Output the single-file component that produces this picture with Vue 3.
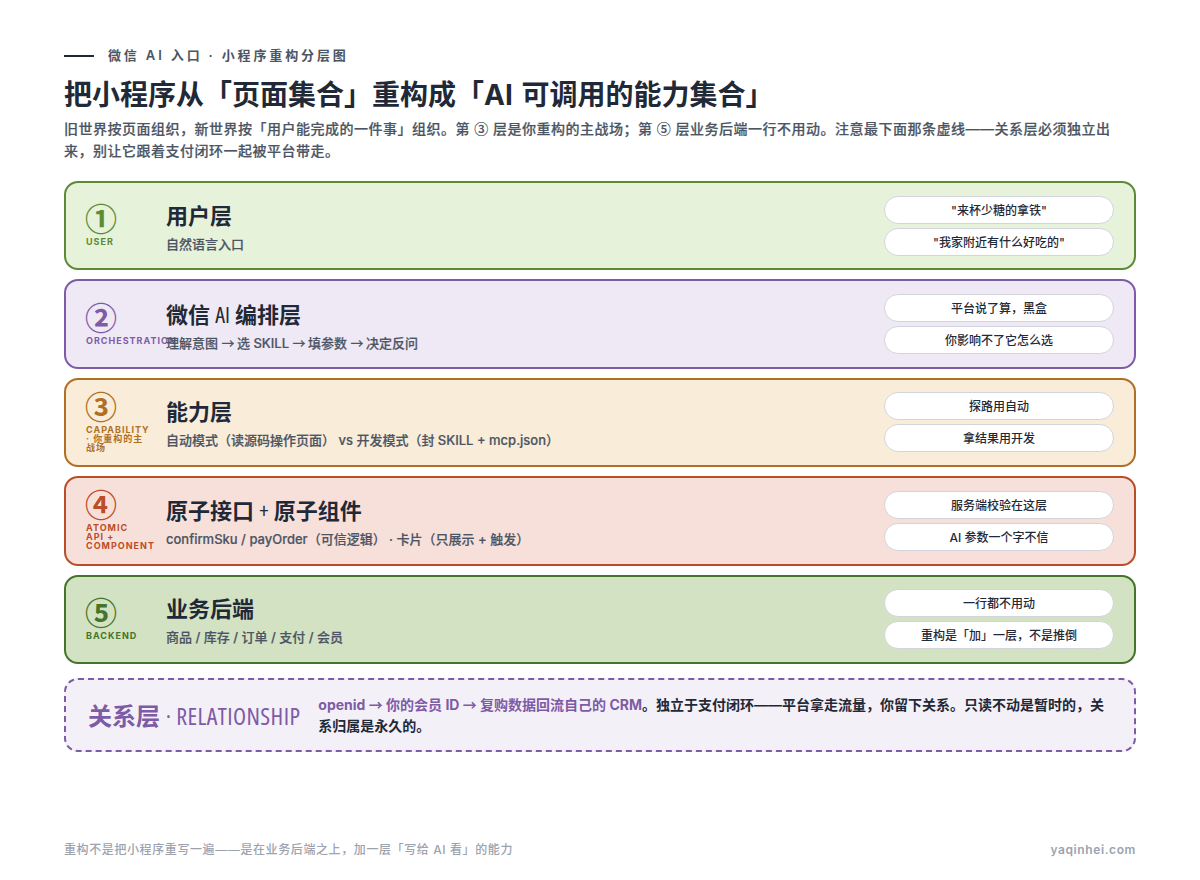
<template>
  <div class="page">
    <div class="eyebrow"><span class="rule"></span>微信 AI 入口 · 小程序重构分层图</div>
    <h1>把小程序从「页面集合」重构成「AI 可调用的能力集合」</h1>
    <p class="lead">旧世界按页面组织，新世界按「用户能完成的一件事」组织。第 <span class="cjk">③</span> 层是你重构的主战场；第 <span class="cjk">⑤</span> 层业务后端一行不用动。注意最下面那条虚线——关系层必须独立出来，别让它跟着支付闭环一起被平台带走。</p>

    <div class="layers">
      <div v-for="l in layers" :key="l.num" class="layer" :class="l.cls">
        <div class="num">
          <div class="digit">{{ l.num }}</div>
          <div class="tag">{{ l.tag }}</div>
        </div>
        <div class="body">
          <div class="name">
            <span v-for="(part, i) in nameParts(l.name)" :key="i" :class="{ thin: i % 2 === 1 }">{{ part }}</span>
          </div>
          <div class="desc">
            <span v-for="(part, i) in arrowParts(l.desc)" :key="i" :class="{ arrow: i % 2 === 1 }">{{ part }}</span>
          </div>
        </div>
        <div class="pills">
          <div v-for="p in l.pills" :key="p" class="pill">{{ p }}</div>
        </div>
      </div>
    </div>

    <div class="relation">
      <div class="rel-title">关系层 <span class="thin">· RELATIONSHIP</span></div>
      <div class="rel-text"><span class="hl"><span v-for="(part, i) in arrowParts(relationLead)" :key="i" :class="{ arrow: i % 2 === 1 }">{{ part }}</span></span>。独立于支付闭环——平台拿走流量，你留下关系。只读不动是暂时的，关系归属是永久的。</div>
    </div>

    <div class="footer">
      <span>重构不是把小程序重写一遍——是在业务后端之上，加一层「写给 AI 看」的能力</span>
      <span class="site">yaqinhei.com</span>
    </div>
  </div>
</template>

<script setup>
const layers = [
  { num: "①", cls: "l1", tag: "USER", name: "用户层", desc: "自然语言入口", pills: ['"来杯少糖的拿铁"', '"我家附近有什么好吃的"'] },
  { num: "②", cls: "l2", tag: "ORCHESTRATION", name: "微信 AI 编排层", desc: "理解意图 → 选 SKILL → 填参数 → 决定反问", pills: ["平台说了算，黑盒", "你影响不了它怎么选"] },
  { num: "③", cls: "l3", tag: "CAPABILITY · 你重构的主战场", name: "能力层", desc: "自动模式（读源码操作页面） vs 开发模式（封 SKILL + mcp.json）", pills: ["探路用自动", "拿结果用开发"] },
  { num: "④", cls: "l4", tag: "ATOMIC API + COMPONENT", name: "原子接口 + 原子组件", desc: "confirmSku / payOrder（可信逻辑） · 卡片（只展示 + 触发）", pills: ["服务端校验在这层", "AI 参数一个字不信"] },
  { num: "⑤", cls: "l5", tag: "BACKEND", name: "业务后端", desc: "商品 / 库存 / 订单 / 支付 / 会员", pills: ["一行都不用动", "重构是「加」一层，不是推倒"] },
];

const relationLead = "openid → 你的会员 ID → 复购数据回流自己的 CRM";

// 标题里的拉丁字符用窄字体
const nameParts = (name) => name.split(/([A-Za-z+]+)/);
// 箭头用 CJK 字体，比 Inter 的长
const arrowParts = (text) => text.split(/(→)/);
</script>

<style>
html, body { margin: 0; background: #fff; }
</style>

<style scoped>
.page {
  box-sizing: border-box;
  width: 1200px;
  height: 880px;
  padding: 47px 64px 0;
  font-family: Inter, "Noto Sans CJK SC", sans-serif;
  color: #1f2937;
  position: relative;
  display: flex;
  flex-direction: column;
}
.eyebrow {
  display: flex;
  align-items: center;
  gap: 14px;
  font-size: 13px;
  font-weight: 600;
  letter-spacing: 2.86px;
  line-height: 16px;
  color: #4b5563;
}
.rule { width: 30px; height: 2px; margin-top: 1px; background: #1f2937; }
h1 {
  margin: 14px 0 0;
  font-size: 28px;
  font-weight: 700;
  line-height: 36px;
  word-spacing: 2px;
  color: #1f2937;
}
.lead {
  margin: 4px 0 0;
  max-width: 1050px;
  font-size: 14px;
  font-weight: 500;
  letter-spacing: 0.5px;
  line-height: 22px;
  color: #4b5563;
  -webkit-text-stroke: 0.2px #4b5563;
}
.cjk { font-family: "Noto Sans CJK SC", sans-serif; }
.layers {
  margin-top: 19px;
  display: flex;
  flex-direction: column;
  gap: 9px;
}
.layer {
  box-sizing: border-box;
  height: 89.4px;
  display: flex;
  align-items: center;
  padding: 0 20px;
  border: 2px solid;
  border-radius: 14px;
}
.num { width: 80px; flex: none; }
.digit {
  height: 28px;
  margin-left: -1px;
  font-family: "Noto Sans CJK SC", sans-serif;
  font-size: 32px;
  font-weight: 700;
  line-height: 25px;
}
.tag {
  width: 60px;
  font-size: 9px;
  font-weight: 700;
  letter-spacing: 1px;
  line-height: 9px;
  margin-top: 4px;
}
.body { flex: 1; padding-top: 3px; }
.name { font-size: 22px; font-weight: 700; line-height: 30px; color: #1f2937; }
.thin {
  font-family: "Open Sans", sans-serif;
  font-stretch: 75%;
  font-weight: 500;
}
.rel-title .thin { letter-spacing: 0.4px; }
.arrow { font-family: "Noto Sans CJK SC", sans-serif; letter-spacing: -1px; }
.rel-text .arrow { letter-spacing: 0; }
.desc {
  margin-top: 3px;
  font-size: 13px;
  font-weight: 500;
  line-height: 20px;
  color: #4b5563;
  -webkit-text-stroke: 0.2px #4b5563;
}
.pills { width: 230px; display: flex; flex-direction: column; gap: 4px; }
.pill {
  box-sizing: border-box;
  height: 28px;
  background: #fff;
  border: 1px solid #d1d5db;
  border-radius: 14px;
  font-size: 12px;
  font-weight: 500;
  line-height: 28px;
  text-align: center;
  color: #1f2937;
}
.l1 { background: #e6f2da; border-color: #5b8c35; }
.l1 .digit, .l1 .tag { color: #5b8c35; }
.l2 { background: #efe9f6; border-color: #7e5ba6; }
.l2 .digit, .l2 .tag { color: #7e5ba6; }
.l3 { background: #f9ecd8; border-color: #b06f24; }
.l3 .digit, .l3 .tag { color: #b06f24; }
.l4 { background: #f8e0da; border-color: #bb4d28; }
.l4 .digit, .l4 .tag { color: #bb4d28; }
.l5 { background: #d3e2c3; border-color: #44752a; }
.l5 .digit, .l5 .tag { color: #44752a; }
.relation {
  box-sizing: border-box;
  margin-top: 14px;
  height: 74px;
  display: flex;
  align-items: center;
  gap: 18px;
  padding: 0 22px;
  background: #f4f0f8;
  border: 2px dashed #7e5ba6;
  border-radius: 14px;
}
.rel-title { flex: none; font-size: 24px; font-weight: 700; color: #7e5ba6; }
.rel-text { font-size: 14px; font-weight: 600; line-height: 21px; color: #1f2937; }
.hl { color: #7e5ba6; font-weight: 700; }
.footer {
  position: absolute;
  left: 64px;
  right: 64px;
  bottom: 21px;
  display: flex;
  justify-content: space-between;
  font-size: 12px;
  line-height: 18px;
  font-weight: 500;
  letter-spacing: 0.6px;
  color: #9ca3af;
}
.site { font-weight: 600; }
</style>
